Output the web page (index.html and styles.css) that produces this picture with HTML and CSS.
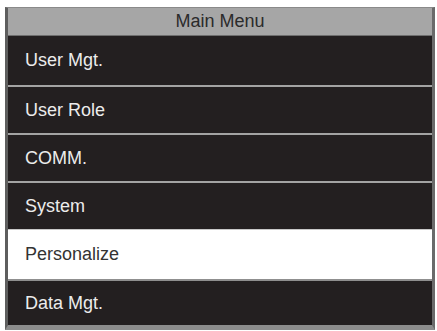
FILE: index.html
```html
<!DOCTYPE html>
<html>
<head>
<meta charset="utf-8">
<link rel="stylesheet" href="styles.css">
</head>
<body>
<div class="screen">
  <div class="header">Main Menu</div>
  <ul class="menu">
    <li class="item first">User Mgt.</li>
    <li class="item">User Role</li>
    <li class="item">COMM.</li>
    <li class="item">System</li>
    <li class="item selected">Personalize</li>
    <li class="item last">Data Mgt.</li>
  </ul>
</div>
</body>
</html>
```
FILE: styles.css
```css
html, body {
  margin: 0;
  padding: 0;
  background: #ffffff;
}
body {
  font-family: "Liberation Sans", Arial, sans-serif;
}
.screen {
  margin: 7px 0 0 5px;
  width: 430px;
  box-sizing: border-box;
  border-left: 3px solid #5e5e5e;
  border-right: 3px solid #6a6a6a;
  border-top: 1px solid #8a8a8a;
  border-bottom: 5px solid #8c8c8c;
  background: #231f20;
}
.header {
  height: 27px;
  line-height: 27px;
  background: #a6a6a6;
  border-bottom: 1px solid #6e6e6e;
  color: #2b2b2b;
  font-size: 18px;
  text-align: center;
}
.menu {
  list-style: none;
  margin: 0;
  padding: 0;
}
.item {
  height: 46px;
  line-height: 46px;
  border-top: 2px solid #a3a3a3;
  padding-left: 17px;
  color: #ececec;
  font-size: 18px;
  background: #231f20;
}
.item.first {
  height: 49px;
  line-height: 49px;
  border-top: none;
}
.item.selected {
  background: #ffffff;
  color: #333333;
  border-top: 1px solid #c8c8c8;
  height: 49px;
  line-height: 49px;
}
.item.last {
  border-top: 2px solid #8f8f8f;
  height: 44px;
  line-height: 44px;
}
```
